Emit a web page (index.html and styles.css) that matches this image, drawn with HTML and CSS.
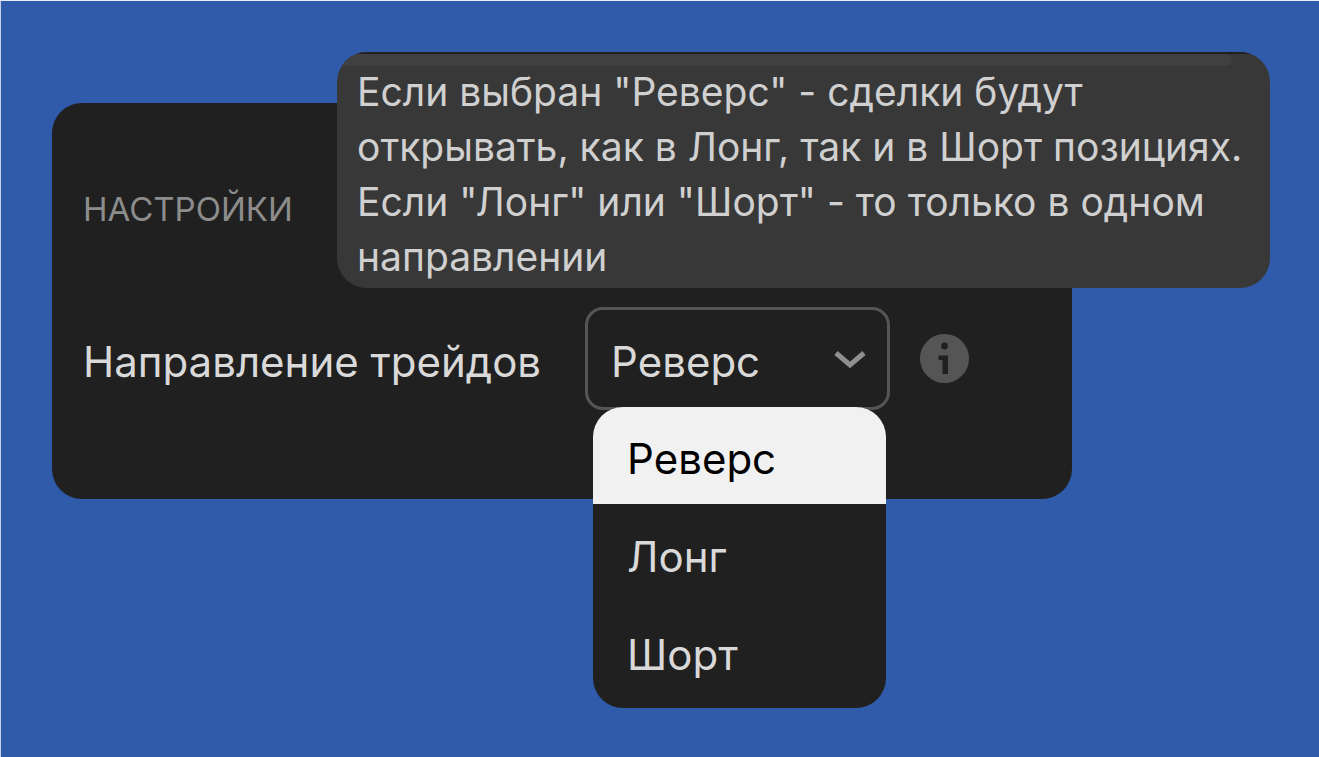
FILE: index.html
```
<!DOCTYPE html>
<html lang="ru">
<head>
    <meta charset="UTF-8">
    <meta name="viewport" content="width=device-width, initial-scale=1.0">
    <title>Настройки</title>
    <link rel="stylesheet" href="styles.css">
</head>
<body>
    <section class="card">
        <h1>НАСТРОЙКИ</h1>

        <div class="row">
            <label for="direction">Направление трейдов</label>

            <div class="select-box">
                <select id="direction">
                    <option selected>Реверс</option>
                    <option>Лонг</option>
                    <option>Шорт</option>
                </select>
                <svg class="arrow" viewBox="0 0 32 20" aria-hidden="true">
                    <path d="M2 3 L16 15 L30 3" fill="none" stroke="currentColor" stroke-width="5"/>
                </svg>
                <div class="menu">
                    <button type="button" class="active">Реверс</button>
                    <button type="button">Лонг</button>
                    <button type="button">Шорт</button>
                </div>
            </div>

            <button type="button" class="info-btn" aria-label="Подсказка" aria-describedby="tip">
                <svg viewBox="0 0 49 49" aria-hidden="true">
                    <circle class="disc" cx="24.5" cy="24.5" r="24.5"/>
                    <circle class="mark" cx="24.5" cy="12" r="3.4"/>
                    <path class="mark" d="M18.5 21.5h9.5v18.5h-5.5v-14h-4z"/>
                </svg>
            </button>
        </div>

        <div class="tooltip" id="tip" role="tooltip">
            <p>Если выбран "Реверс" - сделки будут открывать, как в Лонг, так и в Шорт позициях. Если "Лонг" или "Шорт" - то только в одном направлении</p>
        </div>
    </section>
</body>
</html>
```
FILE: styles.css
```
* {
    margin: 0;
    padding: 0;
    box-sizing: border-box;
    font-family: Inter, "Liberation Sans", sans-serif;
}

body {
    background-color: #2f5baa;
    border-top: 1px solid #e4ecf4;
    border-left: 1px solid #c3d0e6;
    min-height: 100vh;
    padding: 102px 247px 40px 51px;
}

.card {
    position: relative;
    background-color: #202020;
    border-radius: 30px;
    padding: 86px 31px 89px;
}

h1 {
    font-size: 33px;
    font-weight: 400;
    line-height: 40px;
    color: #8c8c8c;
    margin-bottom: 78px;
}

.row {
    display: flex;
    align-items: center;
}

label {
    font-size: 42px;
    line-height: 52px;
    padding-top: 6px;
    margin-right: 44px;
    color: #d9d9d9;
    white-space: nowrap;
}

.select-box {
    position: relative;
    width: 305px;
    margin-right: 30px;
}

select {
    appearance: none;
    display: block;
    width: 100%;
    height: 103px;
    padding: 6px 60px 0 23px;
    background: transparent;
    border: 3px solid #555555;
    border-radius: 18px;
    font-size: 42px;
    color: #d9d9d9;
}

.arrow {
    position: absolute;
    right: 24px;
    top: 43px;
    width: 32px;
    height: 20px;
    color: #8f8f8f;
    pointer-events: none;
}

/* раскрытый список */
.menu {
    position: absolute;
    top: 100px;
    left: 8px;
    right: 4px;
    display: flex;
    flex-direction: column;
    gap: 1px;
    padding-bottom: 8px;
    background-color: #202020;
    border-radius: 30px;
    overflow: hidden;
}

.menu button {
    height: 97px;
    padding: 5px 34px 0;
    background: transparent;
    border: none;
    font-size: 42px;
    text-align: left;
    color: #d9d9d9;
    cursor: pointer;
}

.menu .active {
    background-color: #f1f1f1;
    color: #000000;
}

.info-btn {
    width: 49px;
    height: 49px;
    background: transparent;
    border: none;
    cursor: pointer;
}

.info-btn svg {
    display: block;
}

.disc {
    fill: #555555;
}

.mark {
    fill: #202020;
}

/* подсказка поверх карточки */
.tooltip {
    position: absolute;
    top: -51px;
    left: 285px;
    right: -198px;
    padding: 12px 18px 4px 20px;
    background-color: #383838;
    border-radius: 30px;
    overflow: hidden;
    font-size: 39px;
    line-height: 55px;
    color: #d0d0d0;
}

.tooltip::before {
    content: "";
    position: absolute;
    top: 0;
    left: 0;
    right: 0;
    height: 2px;
    background-color: #202020;
}

.tooltip::after {
    content: "";
    position: absolute;
    top: 2px;
    left: 0;
    right: 38px;
    height: 12px;
    background-color: #404040;
    border-radius: 0 6px 6px 0;
}

.tooltip p {
    position: relative;
    z-index: 1;
}
```
